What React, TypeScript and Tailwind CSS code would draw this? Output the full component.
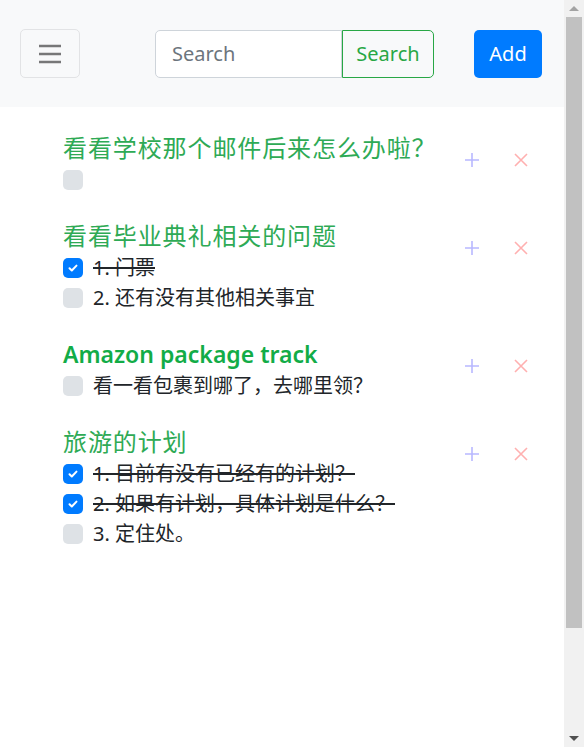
import { useState } from "react"

type Item = { id: string; text: string; done: boolean }
type Group = { id: string; title: string; bold?: boolean; items: Item[] }

const initialGroups: Group[] = [
  {
    id: "g1",
    title: "看看学校那个邮件后来怎么办啦？",
    items: [{ id: "a", text: "", done: false }],
  },
  {
    id: "g2",
    title: "看看毕业典礼相关的问题",
    items: [
      { id: "a", text: "1. 门票", done: true },
      { id: "b", text: "2. 还有没有其他相关事宜", done: false },
    ],
  },
  {
    id: "g3",
    title: "Amazon package track",
    bold: true,
    items: [{ id: "a", text: "看一看包裹到哪了，去哪里领？", done: false }],
  },
  {
    id: "g4",
    title: "旅游的计划",
    items: [
      { id: "a", text: "1. 目前有没有已经有的计划？", done: true },
      { id: "b", text: "2. 如果有计划，具体计划是什么？", done: true },
      { id: "c", text: "3. 定住处。", done: false },
    ],
  },
]

const font = "font-['Noto_Sans','Noto_Sans_CJK_SC',sans-serif]"

function Check({ checked, onToggle }: { checked: boolean; onToggle: () => void }) {
  return (
    <button
      onClick={onToggle}
      className={
        checked
          ? "w-5 h-5 shrink-0 rounded-[5px] bg-[#007bff] flex items-center justify-center"
          : "w-5 h-5 shrink-0 rounded-[5px] bg-[#dee2e6]"
      }
    >
      {checked && (
        <svg viewBox="0 0 12 12" className="w-3 h-3">
          <path d="M2.5 6.2l2.3 2.3 4.7-4.9" fill="none" stroke="#fff" strokeWidth="2" strokeLinecap="round" strokeLinejoin="round" />
        </svg>
      )}
    </button>
  )
}

// classic page scrollbar, as seen in the capture
function Scrollbar() {
  return (
    <div className="w-[20px] h-[747px] shrink-0 bg-[#f1f1f1] flex flex-col">
      <div className="h-[17px] flex items-center justify-center">
        <div className="w-0 h-0 border-x-[5px] border-x-transparent border-b-[5px] border-b-[#a3a3a3]" />
      </div>
      <div className="flex-1 px-[2px]">
        <div className="h-[611px] bg-[#c1c1c1]" />
      </div>
      <div className="h-[17px] flex items-center justify-center">
        <div className="w-0 h-0 border-x-[5px] border-x-transparent border-t-[5px] border-t-[#505050]" />
      </div>
    </div>
  )
}

export default function App() {
  const [groups, setGroups] = useState(initialGroups)

  function toggle(gid: string, iid: string) {
    setGroups((prev) =>
      prev.map((g) =>
        g.id !== gid ? g : { ...g, items: g.items.map((i) => (i.id === iid ? { ...i, done: !i.done } : i)) }
      )
    )
  }

  return (
    <div className={`flex h-[747px] overflow-hidden bg-white ${font}`}>
      <div className="flex-1 h-[747px] overflow-hidden">
        {/* Navbar */}
        <nav className="h-[107px] bg-[#f8f9fa] flex items-center pl-5 pr-[22px]">
          <button className="w-[60px] h-[49px] rounded-[5px] border border-[#e2e3e5] flex items-center justify-center">
            <svg viewBox="0 0 30 30" className="w-[30px] h-[30px]">
              <path d="M4 7h22M4 15h22M4 23h22" stroke="rgba(0,0,0,0.52)" strokeWidth="2.4" />
            </svg>
          </button>
          <div className="flex ml-[75px]">
            <input
              placeholder="Search"
              className="w-[187px] h-[48px] bg-white border border-[#ced4da] rounded-l-[5px] px-4 text-[20px] text-[#495057] placeholder:text-[#6c757d] outline-none"
            />
            <button className="w-[92px] h-[48px] border border-[#28a745] rounded-r-[5px] text-[20px] text-[#28a745]">
              Search
            </button>
          </div>
          <button className="ml-auto w-[68px] h-[48px] rounded-[5px] bg-[#007bff] text-white text-[20px]">Add</button>
        </nav>

        {/* List */}
        <div className="pl-[63px] pr-[36px] pt-[26px] flex flex-col gap-[26px]">
          {groups.map((g) => (
            <div key={g.id} className="flex items-start">
              <div className="flex-1">
                <h4
                  className={
                    g.bold
                      ? "text-[23px] leading-[30px] mb-[2px] font-semibold text-[#12ac47]"
                      : "text-[24px] leading-[30px] mb-[2px] tracking-[0.9px] text-[#2eaa55]"
                  }
                >
                  {g.title}
                </h4>
                <div className="flex flex-col">
                  {g.items.map((i) => (
                    <div key={i.id} className="flex items-center gap-[10px] h-[30px]">
                      <Check checked={i.done} onToggle={() => toggle(g.id, i.id)} />
                      <span
                        className={
                          i.done
                            ? "text-[20px] leading-[30px] text-[#212529] line-through decoration-2 decoration-[#212529]"
                            : "text-[20px] leading-[30px] text-[#212529]"
                        }
                      >
                        {i.text}
                      </span>
                    </div>
                  ))}
                </div>
              </div>
              <div className="flex items-center gap-[35px] pt-[20px]">
                <button className="w-[14px] h-[14px]">
                  <svg viewBox="0 0 14 14" className="w-[14px] h-[14px]">
                    <path d="M7 0v14M0 7h14" stroke="#b8b8ff" strokeWidth="1.6" />
                  </svg>
                </button>
                <button className="w-[14px] h-[14px]">
                  <svg viewBox="0 0 14 14" className="w-[14px] h-[14px]">
                    <path d="M1 1l12 12M13 1L1 13" stroke="#ffb0b0" strokeWidth="1.6" />
                  </svg>
                </button>
              </div>
            </div>
          ))}
        </div>
      </div>
      <Scrollbar />
    </div>
  )
}
